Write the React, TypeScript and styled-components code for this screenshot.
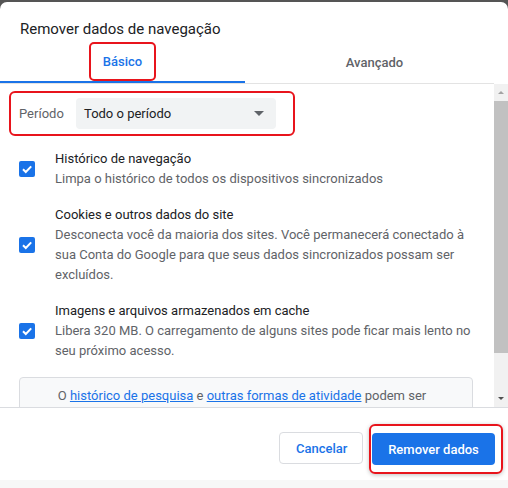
import styled, { createGlobalStyle } from 'styled-components';

const GlobalStyle = createGlobalStyle`
    html, body {
        margin: 0;
        padding: 0;
    }
    body {
        width: 508px;
        height: 488px;
        overflow: hidden;
        background: linear-gradient(#555555 0 12px, #f7f7f7 12px);
        font-family: Roboto, 'Liberation Sans', sans-serif;
        font-size: 13px;
        color: #202124;
    }
`;

const items = [
    {
        id: 'history',
        title: 'Histórico de navegação',
        text: 'Limpa o histórico de todos os dispositivos sincronizados',
    },
    {
        id: 'cookies',
        title: 'Cookies e outros dados do site',
        text: 'Desconecta você da maioria dos sites. Você permanecerá conectado à sua Conta do Google para que seus dados sincronizados possam ser excluídos.',
    },
    {
        id: 'cache',
        title: 'Imagens e arquivos armazenados em cache',
        text: 'Libera 320 MB. O carregamento de alguns sites pode ficar mais lento no seu próximo acesso.',
    },
];

export default function App() {
    return (
        <>
            <GlobalStyle />
            <Dialog>
                <Title>Remover dados de navegação</Title>
                <TabBar>
                    <Tab $active>
                        <Highlight $pad='10px 12px'>Básico</Highlight>
                    </Tab>
                    <Tab $offset={10}>Avançado</Tab>
                </TabBar>
                <Body>
                    <ScrollArea>
                        <PeriodHighlight>
                            <PeriodLabel>Período</PeriodLabel>
                            <Select>
                                <span>Todo o período</span>
                                <Caret />
                            </Select>
                        </PeriodHighlight>
                        <ItemList>
                            {items.map(({ id, title, text }) => (
                                <Item key={id}>
                                    <CheckBox>
                                        <svg width='12' height='12' viewBox='0 0 12 12'>
                                            <path d='M2 6.2 L4.8 9 L10.2 3.4' stroke='#fff' strokeWidth='2' fill='none' />
                                        </svg>
                                    </CheckBox>
                                    <ItemText>
                                        <ItemTitle>{title}</ItemTitle>
                                        <ItemDescription>{text}</ItemDescription>
                                    </ItemText>
                                </Item>
                            ))}
                        </ItemList>
                        <InfoBox>
                            O <InfoLink>histórico de pesquisa</InfoLink> e <InfoLink>outras formas de atividade</InfoLink> podem
                            ser salvos na sua Conta do Google quando você estiver conectado. É possível excluí-los a qualquer
                            momento.
                        </InfoBox>
                    </ScrollArea>
                    <Scrollbar>
                        <ScrollArrow $up $disabled />
                        <ScrollThumb />
                        <ScrollArrow />
                    </Scrollbar>
                </Body>
                <Footer>
                    <SecondaryButton>Cancelar</SecondaryButton>
                    <ButtonHighlight>
                        <PrimaryButton>Remover dados</PrimaryButton>
                    </ButtonHighlight>
                </Footer>
            </Dialog>
        </>
    );
}

const Dialog = styled.div`
    margin-top: 2px;
    width: 508px;
    height: 478px;
    background: #fff;
    border-radius: 7px 7px 0 0;
    display: flex;
    flex-direction: column;
    overflow: hidden;
`;

const Title = styled.h2`
    margin: 0;
    padding: 15px 20px 0;
    height: 24px;
    font-size: 15px;
    font-weight: 400;
    line-height: 24px;
    color: #202124;
`;

const TabBar = styled.div`
    display: flex;
    height: 42px;
    margin-right: 14px;
    border-bottom: 1px solid #e3e3e3;
`;

const Tab = styled.div<{ $active?: boolean; $offset?: number }>`
    flex: ${(p) => (p.$active ? '0 0 245px' : '1')};
    display: flex;
    align-items: center;
    justify-content: center;
    padding-left: ${(p) => p.$offset ?? 0}px;
    font-weight: 500;
    font-size: 13px;
    color: ${(p) => (p.$active ? '#1a73e8' : '#5f6368')};
    box-shadow: ${(p) => (p.$active ? 'inset 0 -2px 0 #1a73e8' : 'none')};
`;

const Highlight = styled.span<{ $pad: string }>`
    padding: ${(p) => p.$pad};
    border: 2px solid #e8141c;
    border-radius: 5px;
    margin-bottom: 2px;
`;

const Body = styled.div`
    flex: 1;
    display: flex;
    min-height: 0;
    border-bottom: 1px solid #dadce0;
`;

const ScrollArea = styled.div`
    flex: 1;
    overflow: hidden;
    padding-top: 7px;
`;

const Scrollbar = styled.div`
    flex: 0 0 14px;
    display: flex;
    flex-direction: column;
    background: #f1f1f1;
`;

const ScrollArrow = styled.div<{ $up?: boolean; $disabled?: boolean }>`
    height: 17px;
    display: flex;
    align-items: center;
    justify-content: center;
    margin-top: ${(p) => (p.$up ? '0' : 'auto')};

    &::before {
        content: '';
        border-left: 3.5px solid transparent;
        border-right: 3.5px solid transparent;
        ${(p) => (p.$up ? 'border-bottom' : 'border-top')}: 3.5px solid ${(p) => (p.$disabled ? '#a3a3a3' : '#505050')};
    }
`;

const ScrollThumb = styled.div`
    height: 252px;
    background: #c1c1c1;
`;

const PeriodHighlight = styled.div`
    display: flex;
    align-items: center;
    width: 286px;
    height: 45px;
    margin-left: 9px;
    padding-left: 8px;
    border: 2px solid #e8141c;
    border-radius: 6px;
    box-sizing: border-box;
`;

const PeriodLabel = styled.span`
    width: 57px;
    color: #5f6368;
`;

const Select = styled.div`
    width: 200px;
    height: 31px;
    display: flex;
    align-items: center;
    justify-content: space-between;
    padding: 0 8px;
    box-sizing: border-box;
    background: #f1f3f4;
    border-radius: 4px;
    color: #202124;
`;

const Caret = styled.span`
    width: 0;
    height: 0;
    margin-right: 4px;
    border-left: 5px solid transparent;
    border-right: 5px solid transparent;
    border-top: 5px solid #5f6368;
`;

const ItemList = styled.div`
    display: flex;
    flex-direction: column;
    gap: 16px;
    padding: 13px 0 16px 19px;
`;

const Item = styled.div`
    display: flex;
    align-items: center;
`;

const CheckBox = styled.span`
    flex: 0 0 16px;
    height: 16px;
    border-radius: 2px;
    background: #1a73e8;
    display: flex;
    align-items: center;
    justify-content: center;
    margin-right: 20px;
`;

const ItemText = styled.div`
    width: 418px;
    line-height: 20px;
`;

const ItemTitle = styled.div`
    color: #202124;
`;

const ItemDescription = styled.div`
    color: #5f6368;
`;

const InfoBox = styled.div`
    margin: 0 21px 12px 19px;
    padding: 8px 28px 8px 20px;
    border: 1px solid #dadce0;
    border-radius: 4px;
    background: #f8f9fa;
    color: #5f6368;
    line-height: 20px;
    text-align: center;
`;

const InfoLink = styled.a`
    color: #1a73e8;
    text-decoration: underline;
`;

const Footer = styled.div`
    height: 72px;
    display: flex;
    justify-content: flex-end;
    align-items: flex-start;
    gap: 6px;
    padding: 16px 5px 0 0;
    box-sizing: border-box;
`;

const BaseButton = styled.button`
    height: 32px;
    padding: 0 16px;
    border-radius: 4px;
    font-family: Roboto, 'Liberation Sans', sans-serif;
    font-size: 13px;
    font-weight: 500;
`;

const SecondaryButton = styled(BaseButton)`
    margin-top: 8px;
    width: 84px;
    background: #fff;
    border: 1px solid #dadce0;
    color: #1a73e8;
`;

const ButtonHighlight = styled.div`
    padding: 7px 6px 7px 1px;
    border: 2px solid #e8141c;
    border-radius: 6px;
    box-shadow: 0 1px 4px rgba(0, 0, 0, 0.25);
`;

const PrimaryButton = styled(BaseButton)`
    width: 123px;
    background: #1a73e8;
    border: none;
    color: #fff;
`;
